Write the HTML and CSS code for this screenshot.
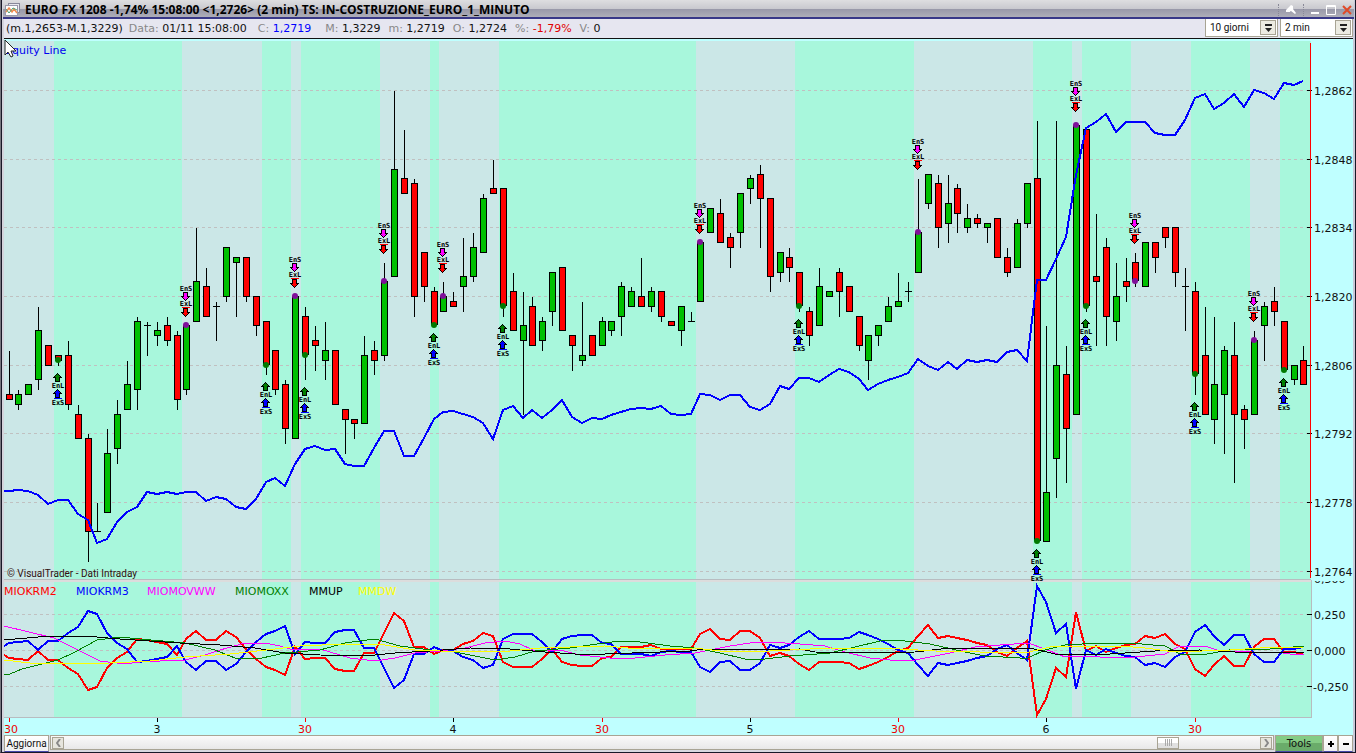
FILE: index.html
```html
<!DOCTYPE html>
<html lang="it">
<head>
<meta charset="utf-8">
<title>EURO FX 1208</title>
<link rel="stylesheet" href="styles.css">
</head>
<body>
<main class="window">
  <header class="titlebar">
    <svg class="app-icon" width="15" height="13" viewBox="0 0 15 13">
      <rect x="3.500" y="0.500" width="11" height="9" fill="#e8e8ee" stroke="#889"/>
      <rect x="0.500" y="2.500" width="12" height="10" fill="#fff" stroke="#99a"/>
      <path d="M1 9l3-4 3 4 2-3 3 4" fill="none" stroke="#f08a50" stroke-width="1.500"/>
      <path d="M1 6l3 4 4-5 4 2" fill="none" stroke="#51a072"/>
    </svg>
    <h1 class="title">EURO FX 1208 -1,74% 15:08:00 &lt;1,2726&gt; (2 min) TS: IN-COSTRUZIONE_EURO_1_MINUTO</h1>
    <div class="window-tools">
      <button class="tool" type="button" aria-label="Blocca"><svg width="12" height="12" viewBox="0 0 12 12"><path d="M1 6l5-5 2 1v3l3 4-1 1-4-3-2 1z" fill="#fff"/><path d="M1 7h4" stroke="#fff" stroke-width="2"/></svg></button>
      <button class="tool" type="button" aria-label="Riduci"><svg width="10" height="10" viewBox="0 0 10 10"><path d="M1 8h8" stroke="#fff" stroke-width="2"/></svg></button>
      <button class="tool" type="button" aria-label="Ingrandisci"><svg width="10" height="10" viewBox="0 0 10 10"><path d="M0.500 0.500h9v9h-9zM0.500 1.500h9" fill="none" stroke="#fff"/></svg></button>
      <button class="tool" type="button" aria-label="Chiudi"><svg width="10" height="10" viewBox="0 0 10 10"><path d="M1 1l8 8M9 1l-8 8" stroke="#e04a28" stroke-width="2"/></svg></button>
    </div>
  </header>
  <div class="infobar">
    <p class="quotes">
      <span class="range">(m.1,2653-M.1,3229)</span>
      <span class="quote when"><span class="key">Data:</span> 01/11 15:08:00</span>
      <span class="quote close"><span class="key">C:</span> <span class="up">1,2719</span></span>
      <span class="quote high"><span class="key">M:</span> 1,3229</span>
      <span class="quote"><span class="key">m:</span> 1,2719</span>
      <span class="quote"><span class="key">O:</span> 1,2724</span>
      <span class="quote"><span class="key">%:</span> <span class="down">-1,79%</span></span>
      <span class="quote"><span class="key">V:</span> 0</span>
    </p>
    <div class="pickers">
      <div class="picker"><select aria-label="Giorni"><option>10 giorni</option></select><span class="drop"><svg width="9" height="8" viewBox="0 0 9 8"><path d="M1 0h7v2H1zM1 4h7L4.500 8z" fill="#222"/></svg></span></div>
      <div class="picker"><select aria-label="Compressione"><option>2 min</option></select><span class="drop"><svg width="9" height="8" viewBox="0 0 9 8"><path d="M1 0h7v2H1zM1 4h7L4.500 8z" fill="#222"/></svg></span></div>
    </div>
  </div>
  <section class="chart-area">
    <svg id="chart" class="chart" viewBox="4 39 1349 696" role="img" aria-label="EURO FX 2 min"></svg>
    <svg class="pointer" width="13" height="19" viewBox="0 0 13 19"><path d="M1 1v15l3-3 3 5 2-1-2-5h5z" fill="#fff" stroke="#222"/></svg>
  </section>
  <footer class="bottombar">
    <button class="refresh" type="button">Aggiorna</button>
    <div class="scroller">
      <button class="arrow" type="button" aria-label="Indietro"><svg width="5" height="8" viewBox="0 0 5 8"><path d="M4 0L1 4l3 4" fill="none" stroke="#888" stroke-width="2"/></svg></button>
      <div class="track"><span class="thumb"><i></i><i></i><i></i><i></i></span></div>
      <button class="arrow" type="button" aria-label="Avanti"><svg width="5" height="8" viewBox="0 0 5 8"><path d="M1 0l3 4-3 4" fill="none" stroke="#888" stroke-width="2"/></svg></button>
    </div>
    <button class="tools-button" type="button">Tools</button>
    <button class="zoom-button" type="button" aria-label="Ingrandisci grafico"><svg width="6" height="6" viewBox="0 0 6 6"><path d="M3 0v6M0 3h6" stroke="#000" stroke-width="2"/></svg></button>
    <button class="zoom-button" type="button" aria-label="Riduci grafico"><svg width="6" height="6" viewBox="0 0 6 6"><path d="M0 3h6" stroke="#000" stroke-width="2"/></svg></button>
  </footer>
</main>
<script src="chart.js"></script>
</body>
</html>
```
FILE: styles.css
```css
* { box-sizing: border-box; }
body {
  margin: 0;
  background: #bfffff;
  font-family: "DejaVu Sans", sans-serif;
  font-size: 11px;
  color: #111;
}
button, select { font: inherit; color: inherit; margin: 0; padding: 0; }
.window {
  border-left: 1px solid #77777f;
  border-bottom: 1px solid #181828;
  box-shadow: inset 1px 0 #181828, inset 3px 0 #d4d4dc, inset -1px 0 #181828, inset -3px 0 #c8c8d8;
  padding: 0 3px;
}
.titlebar {
  display: flex;
  align-items: center;
  height: 19px;
  margin: 0 -1px;
  padding: 2px 2px 0 2px;
  background: linear-gradient(#dedee0 0, #c8c8ce 9px, #9898a8 9px, #aeaeb8 17px);
  border-bottom: 2px solid #383888;
}
.app-icon { flex: none; }
.title {
  flex: 1;
  margin: 0 0 0 5px;
  font: bold 12px/15px "Open Sans", sans-serif;
  color: #000;
  white-space: nowrap;
}
.window-tools { display: flex; gap: 6px; }
.tool {
  display: flex;
  align-items: center;
  background: none;
  border: 0;
}
.tool:first-child {
  padding: 0 6px;
  border: dotted #888896;
  border-width: 0 1px;
}
.infobar {
  display: flex;
  justify-content: space-between;
  height: 20px;
  background: #e6e6f0;
  border-bottom: 1px solid #111;
}
.quotes {
  display: flex;
  align-items: center;
  margin: 0;
  padding-left: 2px;
  white-space: nowrap;
}
.quote { margin-right: 8px; }
.when { margin: 0 6px; }
.close { margin-left: 5px; }
.high { margin-left: 6px; }
.key { color: #888; }
.up { color: #00f; }
.down { color: #e00000; }
.pickers { display: flex; gap: 2px; }
.picker {
  position: relative;
  width: 73px;
  height: 18px;
  border: 1px solid #a8a494;
  border-top: 0;
  background: #fff;
}
.picker select {
  display: block;
  width: 100%;
  height: 17px;
  padding-left: 4px;
  border: 0;
  background: #fff;
  appearance: none;
  font: 10px Roboto, sans-serif;
}
.drop {
  position: absolute;
  top: 1px;
  right: 1px;
  display: grid;
  place-items: center;
  width: 16px;
  height: 15px;
  background: #ecebe2;
  border: 1px solid #a8a494;
  pointer-events: none;
}
.chart-area { position: relative; background: #bfffff; }
.chart { display: block; width: 100%; height: auto; }
.pointer { position: absolute; left: 0; top: 0; }
.chart polyline, .chart path, .chart line, .chart rect { shape-rendering: crispEdges; }
.band { fill: #a8f7dc; }
.pane { fill: #cbe7e7; }
.grid { stroke: #c0c0c0; stroke-dasharray: 3 3; }
.rule { stroke: #b8bcc0; }
.splitter { fill: #dcdcdc; }
.axis { stroke: #f00; }
.tick { stroke: #000; }
.tick.minor { stroke: #f00; }
.bull { fill: #00c000; stroke: #000; }
.bear { fill: #f00; stroke: #000; }
.wick { stroke: #000; }
.line { fill: none; stroke-width: 1; }
.line.thick { stroke-width: 2; }
.signal { font: bold 7px "DejaVu Sans Mono", monospace; text-anchor: middle; fill: #000; }
.scale { fill: #111; }
.scale.minor { fill: #f00000; }
.time { text-anchor: middle; }
.credit { font: 10px Roboto, sans-serif; fill: #301010; }
.bottombar {
  display: flex;
  height: 17px;
  background: #d8d8e0;
}
.refresh, .zoom-button {
  background: linear-gradient(#fff, #f0f0f2);
  border: 1px solid #a8a494;
  border-bottom-color: #4848a8;
}
.refresh { width: 45px; font: 10px/12px Roboto, sans-serif; }
.scroller {
  flex: 1;
  display: flex;
  align-items: center;
  margin: 0 1px;
  padding: 0 1px;
  height: 15px;
  border: 1px solid #a8a494;
  background: linear-gradient(#fafafa, #e8e8e8);
}
.arrow {
  display: grid;
  place-items: center;
  width: 12px;
  height: 12px;
  border: 1px solid #a8a494;
  background: #e6e5dd;
}
.track { flex: 1; display: flex; justify-content: flex-end; padding-right: 81px; }
.thumb {
  display: flex;
  align-items: center;
  justify-content: center;
  gap: 1px;
  width: 22px;
  height: 12px;
  border: 1px solid #a8a494;
  background: linear-gradient(#fff 50%, #e0e0e0 50%);
}
.thumb i { width: 1px; height: 7px; background: #aaa; }
.tools-button {
  width: 48px;
  border: 1px solid #a8a494;
  border-bottom-color: #4848a8;
  background: linear-gradient(#84cc84 50%, #6aac6a 50%);
  font: 10px/12px "DejaVu Sans", sans-serif;
}
.zoom-button { display: grid; place-items: center; width: 15px; }
```
FILE: chart.js
```js
const chart = document.getElementById('chart');
const NS = 'http://www.w3.org/2000/svg';
const STEP = 9.885;
const xAt = i => Math.floor(9 + STEP * i);

function add(tag, attrs, text) {
  const el = document.createElementNS(NS, tag);
  for (const key in attrs) el.setAttribute(key, attrs[key]);
  if (text !== undefined) el.textContent = text;
  chart.appendChild(el);
  return el;
}
const rect = (cls, x, y, width, height) => add('rect', { class: cls, x, y, width, height });
const seg = (cls, x1, y1, x2, y2) => add('line', { class: cls, x1, y1, x2, y2 });
const poly = (cls, stroke, pts) => add('polyline', { class: cls, stroke, points: pts.join(' ') });

/* Panes and position bands */
const panes = [[41, 538], [582, 135]];
const bands = [[54, 182], [262, 291], [301, 380], [430, 439], [499, 696], [795, 914], [1033, 1072], [1082, 1131], [1191, 1250], [1280, 1311]];
for (const [y, h] of panes) {
  rect('pane', 4, y, 1307, h);
  for (const [a, b] of bands) rect('band', a, y, b - a, h);
}
rect('splitter', 4, 580, 1307, 2);
seg('rule', 4, 579.5, 1311, 579.5);
seg('rule', 4, 717.5, 1311, 717.5);
seg('rule', 1311.5, 580, 1311.5, 718);

/* Price scale */
const prices = [[90, '1,2862'], [159, '1,2848'], [227, '1,2834'], [296, '1,2820'], [365, '1,2806'], [433, '1,2792'], [502, '1,2778'], [571, '1,2764']];
const levels = [[614, '0,250'], [650, '0,000'], [686, '-0,250']];
for (const [y, label] of prices.concat(levels)) {
  seg('grid', 4, y + 0.5, 1307, y + 0.5);
  seg('tick', 1307, y + 0.5, 1312, y + 0.5);
  add('text', { class: 'scale', x: label[0] === '-' ? 1313 : 1314, y: y + 5 }, label);
}
seg('axis', 1310.5, 43, 1310.5, 578);
add('clipPath', { id: 'lower' }).innerHTML = '<rect x="1311" y="581" width="42" height="12"/>';
add('text', { class: 'scale', x: 1314, y: 583, 'clip-path': 'url(#lower)' }, '0,500');

/* Time scale */
['30', '3', '30', '4', '30', '5', '30', '6', '30'].forEach((label, n) => {
  const x = xAt(n * 15);
  const minor = label === '30' ? ' minor' : '';
  seg('tick' + minor, x + 0.5, 718, x + 0.5, 722);
  add('text', { class: 'scale time' + minor, x: Math.max(x, 11), y: 733 }, label);
});

/* Candles: kind, body top, body bottom, high, low (r bear, g bull, d doji) */
const candles = `r394,400,351,400 g394,405,390,410 g384,395,384,395 g330,380,307,390 r345,366,345,366 r355,361,355,366 r355,405,341,410 r414,439,405,439 r438,532,434,562 d531,531,503,531
g453,513,429,513 g414,449,400,464 g384,410,361,410 g321,390,317,410 d325,325,322,356 g330,336,322,346 r325,341,317,346 r335,400,331,410 g325,390,325,395 g281,322,228,322
r286,317,268,317 d306,306,302,341 g247,297,247,302 g257,263,257,317 r257,297,257,302 r296,326,296,336 r321,365,321,375 r350,390,350,395 r384,429,380,444 g296,439,296,439
r316,355,307,380 r340,346,326,371 g350,361,322,380 r350,405,350,405 r409,420,409,454 r419,424,419,439 g355,424,336,424 r350,361,341,375 g281,356,263,361 g169,277,91,277
r178,194,130,194 r183,297,179,317 r252,287,252,302 r291,325,287,325 g296,312,282,312 r301,307,292,307 g276,287,238,312 g247,277,233,282 g198,253,194,253 r188,194,160,194
r188,306,188,317 r291,331,273,331 g325,341,292,415 r306,346,297,346 g321,341,317,351 g272,312,272,326 r267,331,267,331 r335,346,335,371 g355,361,302,366 r335,356,335,356
g321,346,317,346 g321,331,321,336 g286,317,282,336 g291,307,287,307 r296,307,258,307 g291,307,287,312 r291,317,291,322 r321,326,321,326 g306,331,306,346 d321,321,312,321
g242,302,242,302 g208,233,208,233 r213,243,199,243 r237,248,233,268 g193,233,193,248 g178,189,175,204 r174,199,165,248 r198,277,198,292 g252,273,252,282 r257,268,248,282
r272,306,272,312 r311,336,307,346 g286,326,268,326 g291,297,291,297 r272,292,268,317 r286,312,286,312 r316,346,316,351 g335,361,335,380 g325,336,325,346 g306,322,297,322
g301,307,273,307 d291,291,282,302 g232,273,179,273 g174,204,174,209 r183,228,175,248 g203,224,175,243 r188,214,184,233 g218,228,204,233 r218,224,214,228 g223,228,223,243
r218,258,218,258 r257,273,248,277 g223,268,219,268 g183,224,183,228 r178,541,121,541 g492,542,326,542 g365,459,121,498 r374,429,346,483 g125,415,125,415 r129,306,129,312
r276,282,214,346 r247,317,238,346 g296,322,263,341 r281,287,258,302 r262,281,253,287 g242,287,242,287 r242,258,242,273 r227,238,227,248 r227,273,227,287 d286,286,268,331
r291,374,282,395 r355,415,307,415 g384,420,317,444 g350,395,346,454 r355,415,322,483 r409,420,405,449 g340,415,331,415 g306,326,302,361 r301,312,287,326 r321,370,321,370
g365,380,365,385 r360,385,346,385`.split(/\s+/);
candles.forEach((c, i) => {
  const [top, bottom, high, low] = c.slice(1).split(',').map(Number);
  const x = xAt(i) + 0.5;
  if (high < low) seg('wick', x, high, x, low);
  if (c[0] === 'd') seg('wick', x - 3.5, top + 0.5, x + 3.5, top + 0.5);
  else rect(c[0] === 'g' ? 'bull' : 'bear', x - 3, top + 0.5, 6, bottom - top - 1);
});

/* Trade signals */
const shorts = [[18, 289, 325], [29, 260, 296], [38, 226, 281], [44, 245, 296], [70, 206, 242], [92, 142, 232], [108, 84, 125], [114, 216, 281], [126, 294, 340]];
for (const [i, y, dot] of shorts) {
  const x = xAt(i);
  add('circle', { cx: x, cy: dot, r: 3, fill: '#80109a' });
  const down = (top, fill) => add('path', { d: `M${x - 2.5} ${top + 0.5}h4v4h2l-4 4l-4 -4h2z`, fill, stroke: '#000' });
  add('text', { class: 'signal', x, y: y + 2 }, 'EnS');
  down(y + 3, '#f0f');
  add('text', { class: 'signal', x, y: y + 17 }, 'ExL');
  down(y + 19, '#f00');
  add('line', { x1: x - 4, y1: y + 18.5, x2: x + 4, y2: y + 18.5, stroke: '#f00' });
}
const longs = [[5, 373, 360], [26, 382, 365], [30, 387, 355], [43, 333, 325], [50, 324, 306], [80, 319, 306], [104, 549, 541], [109, 319, 306], [120, 402, 374], [129, 378, 370]];
for (const [i, y, dot] of longs) {
  const x = xAt(i);
  add('circle', { cx: x, cy: dot, r: 3, fill: '#007a00' });
  const up = (top, fill) => add('path', { d: `M${x - 2.5} ${top + 8.5}h4v-4h2l-4 -4l-4 4h2z`, fill, stroke: '#000' });
  up(y, '#008000');
  add('text', { class: 'signal', x, y: y + 15 }, 'EnL');
  up(y + 16, '#00f');
  add('line', { x1: x - 4, y1: y + 25.5, x2: x + 4, y2: y + 25.5, stroke: '#00f' });
  add('text', { class: 'signal', x, y: y + 32 }, 'ExS');
}

/* Equity line */
const equity = [491, 490, 491, 495, 504, 500, 500, 514, 520, 543, 539, 522, 512, 507, 492, 494, 492, 494, 492, 492, 501, 497, 499, 507, 509, 499, 482, 478, 486, 464, 449, 446, 450, 449, 464, 466, 466, 448, 431, 431, 456, 456, 438, 419, 412, 411, 414, 417, 423, 439, 410, 406, 418, 410, 418, 410, 400, 417, 423, 418, 419, 415, 412, 409, 408, 409, 406, 414, 415, 414, 394, 395, 400, 395, 395, 407, 410, 404, 386, 389, 378, 378, 382, 375, 369, 372, 379, 390, 384, 380, 377, 373, 359, 366, 370, 362, 369, 360, 362, 360, 362, 352, 350, 361, 280, 280, 259, 237, 175, 128, 122, 114, 132, 122, 122, 122, 133, 135, 135, 120, 98, 94, 109, 103, 94, 107, 90, 93, 99, 83, 85, 81];
poly('line thick', '#00f', ['4,491'].concat(equity.map((y, i) => xAt(i) + ',' + y)));

/* Oscillators: MIOKRM2 mirrors MIOKRM3 around zero */
const krm = [643, 642, 641, 650, 641, 641, 633, 627, 611, 614, 633, 643, 649, 662, 661, 659, 657, 646, 662, 670, 661, 661, 670, 664, 652, 642, 634, 631, 626, 654, 642, 643, 643, 632, 630, 630, 648, 648, 668, 688, 680, 654, 654, 647, 651, 651, 657, 660, 668, 665, 639, 634, 634, 634, 642, 652, 639, 636, 635, 635, 643, 644, 654, 654, 654, 656, 652, 651, 652, 652, 667, 672, 662, 661, 670, 670, 663, 645, 648, 645, 637, 631, 639, 639, 639, 638, 632, 635, 639, 644, 650, 653, 665, 676, 663, 665, 663, 661, 658, 656, 649, 645, 653, 660, 586, 602, 633, 624, 689, 650, 655, 649, 653, 656, 657, 665, 663, 667, 657, 652, 632, 625, 636, 645, 635, 635, 654, 662, 662, 649, 649, 647];
poly('line thick', '#f00', ['4,655'].concat(krm.map((y, i) => xAt(i) + ',' + (1301 - y))));
poly('line thick', '#00f', ['4,646'].concat(krm.map((y, i) => xAt(i) + ',' + y)));
poly('line', '#f0f', ['4,626 54,638 72,647 100,661 125,664 140,662 160,661 185,660 205,655 220,650 245,643 265,643 280,646 290,649 320,649 330,652 350,658 375,661 395,658 415,653 440,651 465,648 485,643 505,641 520,644 533,650 560,650 580,655 610,658 635,658 665,655 695,653 705,651 730,646 750,643 770,642 800,644 825,646 845,652 870,658 900,661 915,660 950,653 975,647 1000,645 1028,643 1045,649 1065,657 1075,656 1100,657 1135,657 1165,654 1180,646 1205,646 1220,651 1250,652 1275,652 1290,654 1304,655']);
poly('line', '#008000', ['4,674 10,674 22,669 58,660 75,652 97,640 120,637 140,639 185,643 215,650 235,658 262,658 285,653 320,650 345,643 375,639 400,646 430,650 455,652 475,656 495,660 515,657 535,651 570,648 590,645 620,641 640,642 670,646 695,648 720,653 745,659 765,659 790,656 830,653 855,647 880,641 896,640 930,644 965,652 985,656 1020,658 1028,658 1045,650 1065,645 1100,643 1130,643 1165,646 1180,654 1207,654 1235,649 1270,649 1304,646']);
poly('line', '#000', ['4,640 50,636 85,636 120,639 150,641 180,643 220,645 255,648 285,653 320,655 365,656 395,653 430,651 470,648 510,649 545,652 575,654 605,654 660,652 690,651 705,649 730,650 800,649 815,652 880,653 915,652 950,648 1000,648 1030,648 1055,654 1110,654 1155,651 1200,650 1235,652 1280,652 1304,653']);
poly('line', '#ff0', ['4,660 30,663 60,664 110,663 150,661 185,657 230,654 275,649 300,646 345,644 385,645 415,650 440,651 500,652 540,648 570,647 605,646 640,649 695,648 720,651 770,651 830,648 900,649 935,651 1025,653 1050,647 1070,646 1120,646 1145,648 1175,652 1230,650 1260,648 1304,647']);

/* Captions */
add('text', { x: 5, y: 54, fill: '#0000f0' }, 'Equity Line');
add('text', { class: 'credit', x: 7, y: 577 }, '© VisualTrader - Dati Intraday');
const legend = [[4, 'MIOKRM2', '#f00'], [76, 'MIOKRM3', '#00f'], [147, 'MIOMOVWW', '#f0f'], [235, 'MIOMOXX', '#008000'], [309, 'MMUP', '#000'], [358, 'MMDW', '#ff0']];
for (const [x, name, fill] of legend) add('text', { x, y: 595, fill }, name);
```
